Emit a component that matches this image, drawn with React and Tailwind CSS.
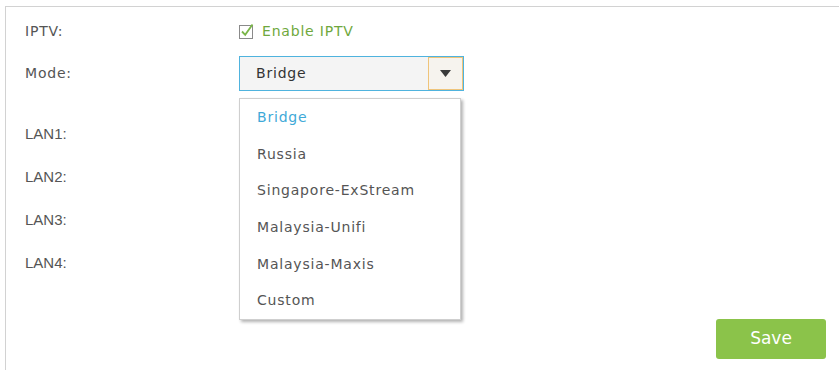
import React from "react";

const modes = [
  "Bridge",
  "Russia",
  "Singapore-ExStream",
  "Malaysia-Unifi",
  "Malaysia-Maxis",
  "Custom",
];

function CheckIcon() {
  return (
    <svg width="17" height="16" viewBox="0 0 17 16" className="shrink-0">
      <rect x="0.5" y="2.5" width="13" height="13" fill="none" stroke="#8a8a8a" strokeWidth="1" />
      <path d="M3 8.5 L6.2 11.8 L13.5 1.5" fill="none" stroke="#7ab648" strokeWidth="1.8" />
    </svg>
  );
}

export default function App() {
  return (
    <div className="w-[839px] h-[370px] bg-white pt-[6px] pl-[5px] overflow-hidden font-['DejaVu_Sans',sans-serif] text-[14px] tracking-[0.8px]">
      <div className="h-full border-l border-t border-[#d2d2d2] pt-[4px] pl-[19px] pr-[13px] flex flex-col">

        {/* IPTV */}
        <div className="flex items-center h-[40px]">
          <div className="w-[214px] text-[#555]">IPTV:</div>
          <div className="flex items-center gap-[6px] text-[#6fa83d]">
            <CheckIcon />
            <span>Enable IPTV</span>
          </div>
        </div>

        {/* Mode */}
        <div className="flex items-center h-[35px] mt-[5px]">
          <div className="w-[214px] text-[#555]">Mode:</div>
          <div className="relative">
            <div className="flex items-center w-[225px] h-[35px] border border-[#4fb3de] bg-[#f4f4f4]">
              <span className="flex-1 pl-[16px] text-[#333]">Bridge</span>
              <div className="w-[35px] h-[33px] border border-[#efc47a] bg-[#f6f3ee] flex items-center justify-center">
                <svg width="11" height="7" viewBox="0 0 11 7">
                  <path d="M0 0 L11 0 L5.5 7 Z" fill="#3a3a3a" />
                </svg>
              </div>
            </div>

            {/* open dropdown */}
            <div className="absolute left-0 top-[42px] w-[222px] z-10 bg-white border border-[#cfcfcf] shadow-[2px_2px_3px_rgba(0,0,0,0.3)]">
              {modes.map((m, i) => (
                <div
                  key={m}
                  className={
                    "h-[36.7px] flex items-center pl-[17px] " +
                    (i === 0 ? "text-[#3fa9d8]" : "text-[#555]")
                  }
                >
                  {m}
                </div>
              ))}
            </div>
          </div>
        </div>

        {/* LAN ports */}
        <div className="flex flex-col mt-[22px] font-['Liberation_Sans',sans-serif] text-[15px] tracking-normal text-[#555]">
          <div className="h-[43px] flex items-center">LAN1:</div>
          <div className="h-[43px] flex items-center">LAN2:</div>
          <div className="h-[43px] flex items-center">LAN3:</div>
          <div className="h-[43px] flex items-center">LAN4:</div>
        </div>

        <div className="flex justify-end mt-[34px]">
          <button className="w-[110px] h-[40px] rounded-[3px] bg-[#8bc34a] text-white text-[17px] tracking-normal">
            Save
          </button>
        </div>
      </div>
    </div>
  );
}
